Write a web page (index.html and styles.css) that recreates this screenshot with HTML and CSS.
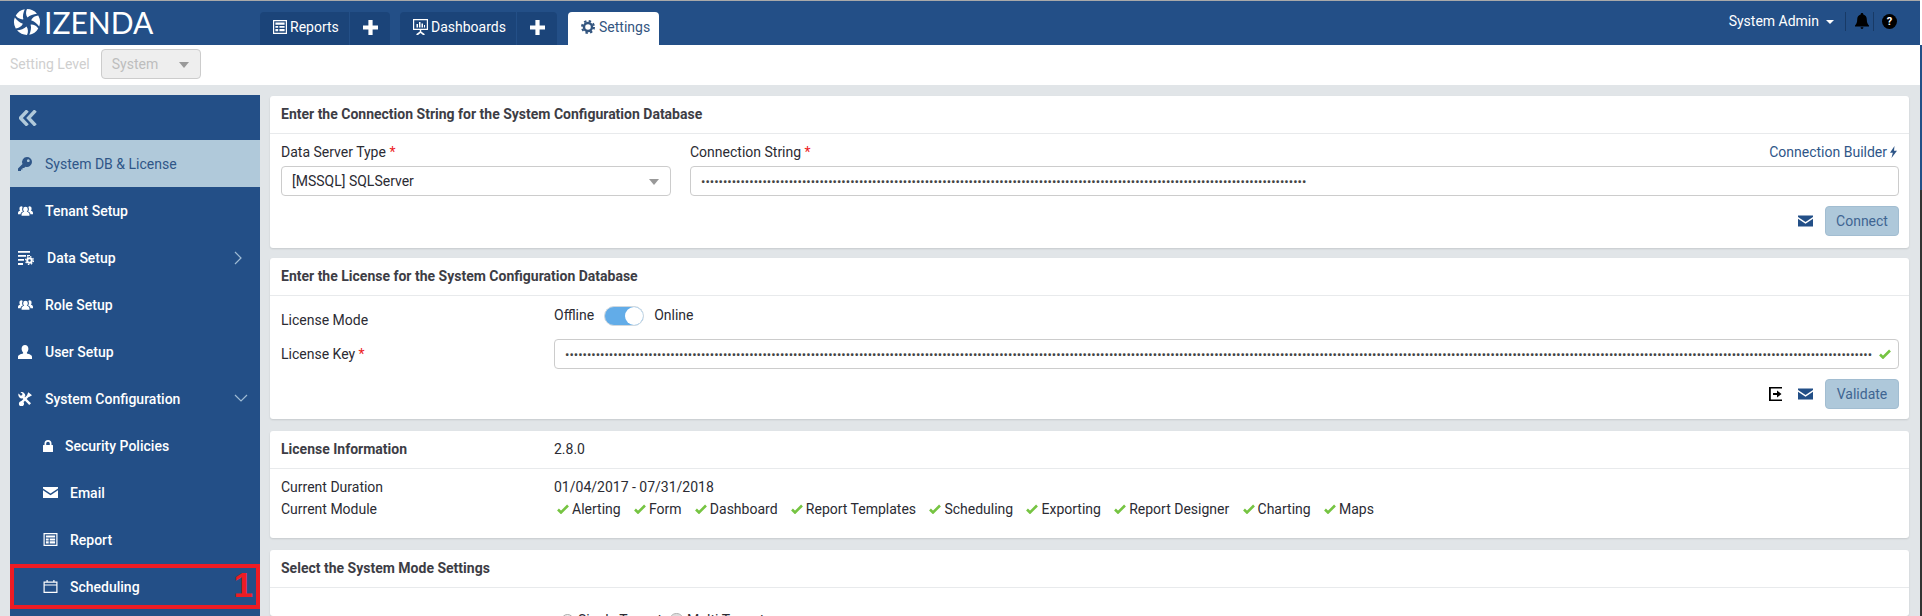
FILE: index.html
```html
<!DOCTYPE html>
<html lang="en">
<head>
    <meta charset="UTF-8">
    <meta name="viewport" content="width=device-width, initial-scale=1.0">
    <title>Izenda - Settings</title>
    <link rel="stylesheet" href="styles.css">
</head>
<body>
    <header class="topbar">
        <div class="logo">
            <svg class="logo-mark" viewBox="0 0 28 28">
                <defs><path id="blade" d="M14 0A14 14 0 0 1 24.700 5C21 5.500 17 6.500 14.500 9.200C12.600 6.200 12.500 3 14 0Z"/></defs>
                <use href="#blade"/>
                <use href="#blade" transform="rotate(60 14 14)"/>
                <use href="#blade" transform="rotate(120 14 14)"/>
                <use href="#blade" transform="rotate(180 14 14)"/>
                <use href="#blade" transform="rotate(240 14 14)"/>
                <use href="#blade" transform="rotate(300 14 14)"/>
            </svg>
            <span class="logo-text">IZENDA</span>
        </div>
        <nav class="tabs">
            <div class="tab-group">
                <a class="tab tab-reports">
                    <svg class="icon-tab" viewBox="0 0 14 14"><path fill-rule="evenodd" d="M0 0h14v14H0zM1.200 1.200v11.600h11.600V1.200zM2.400 2.400h9.200v2.400H2.400zM2.400 6h2.800v1.800H2.400zM6.400 6h5.200v1.800H6.400zM2.400 9h2.800v2.200H2.400zM6.400 9h5.200v2.200H6.400z"/></svg>
                    Reports
                </a>
                <a class="tab-add"><svg class="icon-plus" viewBox="0 0 15 15"><path d="M5.400 0h4.200v5.400H15v4.200H9.600V15H5.400V9.600H0V5.400h5.400z"/></svg></a>
            </div>
            <div class="tab-group">
                <a class="tab tab-dashboards">
                    <svg class="icon-tab icon-screen" viewBox="0 0 15 16"><path fill-rule="evenodd" d="M0 0h15v11H8.200v1.400l3.400 2.600v1H10L7.500 14 5 16H3.400v-1l3.400-2.600V11H0zM1.200 1.200v8.600h12.600V1.200zM3.500 5h1.500v3.500H3.500zM6 3h1.500v5.500H6zM8.500 4.500H10v4H8.500zM11 6h1v2.500h-1z"/></svg>
                    Dashboards
                </a>
                <a class="tab-add"><svg class="icon-plus" viewBox="0 0 15 15"><path d="M5.400 0h4.200v5.400H15v4.200H9.600V15H5.400V9.600H0V5.400h5.400z"/></svg></a>
            </div>
            <a class="tab tab-settings">
                <svg class="icon-tab" viewBox="0 0 16 16"><circle cx="8" cy="8" r="4.600" fill="none" stroke="currentColor" stroke-width="2.800"/><circle cx="8" cy="8" r="6.800" fill="none" stroke="currentColor" stroke-width="2.400" stroke-dasharray="2.700 2.640"/></svg>
                Settings
            </a>
        </nav>
        <div class="user-menu">
            <span class="user-name">System Admin</span>
            <span class="caret"></span>
            <span class="user-sep"></span>
            <svg class="icon-bell" viewBox="0 0 14 16"><path d="M7 0C8 0 8.400.7 8.300 1.500C10.600 2 11.800 4 11.800 6.500C11.800 10 12.800 11 14 12.500V13.500H0V12.500C1.200 11 2.200 10 2.200 6.500C2.200 4 3.400 2 5.700 1.500C5.600.7 6 0 7 0ZM5.600 14.300H8.400C8.400 15.200 7.800 16 7 16C6.200 16 5.600 15.200 5.600 14.300Z"/></svg>
            <span class="user-sep"></span>
            <span class="help-btn">?</span>
        </div>
    </header>

    <div class="toolbar">
        <span class="toolbar-label">Setting Level</span>
        <div class="select select-disabled">System<span class="select-arrow"></span></div>
    </div>

    <main class="page">
        <aside class="sidebar">
            <div class="side-head">
                <svg class="icon-collapse" viewBox="0 0 18 16"><path d="M8.500 .5L1.500 8l7 7.500M16.500 .5L9.500 8l7 7.500"/></svg>
            </div>
            <a class="side-item is-active">
                <svg class="side-icon" viewBox="0 0 14 14"><path fill-rule="evenodd" d="M9 0a5 5 0 0 1 5 5a5 5 0 0 1-6.500 4.700L6 11H4.500v1.500H3V14H0v-2.600L4.500 7A5 5 0 0 1 9 0ZM10.300 2.300a1.400 1.400 0 1 0 .01 0Z"/></svg>
                System DB &amp; License
            </a>
            <a class="side-item">
                <svg class="side-icon icon-users" viewBox="0 0 16 12"><use href="#users"/></svg>
                Tenant Setup
            </a>
            <a class="side-item">
                <svg class="side-icon icon-data" viewBox="0 0 16 14"><path d="M0 0h12v1.800H0zM0 4h8v1.800H0zM9 4h3v1H9zM0 8h6v1.800H0zM0 12h5V14H0z"/><circle cx="11.500" cy="9.500" r="2.300" fill="none" stroke="currentColor" stroke-width="2"/><circle cx="11.500" cy="9.500" r="3.900" fill="none" stroke="currentColor" stroke-width="1.300" stroke-dasharray="1.500 1.560"/></svg>
                Data Setup
                <svg class="chevron chevron-right" viewBox="0 0 8 14"><path d="M1 1l6 6-6 6"/></svg>
            </a>
            <a class="side-item">
                <svg class="side-icon icon-users" viewBox="0 0 16 12">
                    <defs><path id="users" d="M8 1.500a2.500 2.500 0 0 1 2.500 2.500c0 1.200-.6 2.200-1.300 2.800c1.800.4 3 1.200 3 2.700V11H3.800V9.500c0-1.500 1.200-2.300 3-2.700C6.100 6.200 5.500 5.200 5.500 4A2.500 2.500 0 0 1 8 1.500ZM3.500 1a2 2 0 0 1 1.500.7C4.600 2.300 4.400 3 4.400 4c0 1 .3 1.800.9 2.500C3.800 7 2.800 8 2.800 9.500H0V8c0-1.200.8-2 2.300-2.300C1.800 5.200 1.500 4.500 1.500 3.500A2.200 2.200 0 0 1 3.500 1ZM12.500 1a2.200 2.200 0 0 1 2 2.500c0 1-.3 1.700-.8 2.200C15.200 6 16 6.800 16 8v1.500h-2.800c0-1.500-1-2.500-2.500-3c.6-.7.900-1.500.9-2.500c0-1-.2-1.700-.6-2.300A2 2 0 0 1 12.500 1Z"/></defs>
                    <use href="#users"/>
                </svg>
                Role Setup
            </a>
            <a class="side-item">
                <svg class="side-icon" viewBox="0 0 14 14"><path d="M7 0c2 0 3.400 1.600 3.400 3.800c0 1.500-.6 2.800-1.500 3.600v1c2.500.7 5.100 1.400 5.100 3.400V14H0v-2.200c0-2 2.600-2.700 5.100-3.400v-1C4.200 6.600 3.600 5.300 3.600 3.800C3.600 1.600 5 0 7 0Z"/></svg>
                User Setup
            </a>
            <a class="side-item">
                <svg class="side-icon" viewBox="0 0 15 15">
                    <path class="tool-bar" d="M4 4l9 9"/>
                    <path class="tool-bar" d="M11.500 3.500L3.500 11.500"/>
                    <path d="M.6 1.600L3 4l1.400-.4L4.800 2 2.600.2A4 4 0 0 1 7.800 4.600L4.500 7A4 4 0 0 1 .6 1.600Z"/>
                    <path d="M11 .2L15 3.400l-2.600 1.800-2.200-.4-.2-2.200zM3.200 9.800a2.800 2.800 0 1 1-.01 5.500a2.800 2.800 0 0 1 .01-5.500Z"/>
                </svg>
                System Configuration
                <svg class="chevron chevron-down" viewBox="0 0 14 8"><path d="M1 1l6 6 6-6"/></svg>
            </a>
            <a class="side-item side-sub">
                <svg class="sub-icon" viewBox="0 0 10 12"><path fill-rule="evenodd" d="M5 0a3.500 3.500 0 0 1 3.500 3.500V5H9.500a.5.500 0 0 1 .5.500v6a.5.500 0 0 1-.5.500H.5a.5.500 0 0 1-.5-.5v-6A.5.500 0 0 1 .5 5H1.500V3.500A3.500 3.500 0 0 1 5 0ZM3.200 5h3.600V3.500a1.800 1.800 0 0 0-3.600 0Z"/></svg>
                Security Policies
            </a>
            <a class="side-item side-sub">
                <svg class="sub-icon icon-wide" viewBox="0 0 15 11"><use href="#mail"/></svg>
                Email
            </a>
            <a class="side-item side-sub">
                <svg class="sub-icon icon-wide" viewBox="0 0 14 13"><path fill-rule="evenodd" d="M0 0h14v13H0zM1.200 1.200v10.600h11.600V1.200zM2.400 2.400h9.200v2H2.400zM2.400 5.400h2.800v2H2.400zM6.200 5.400h5.400v2H6.200zM2.400 8.300h2.800v2.300H2.400zM6.200 8.300h5.400v2.300H6.200z"/></svg>
                Report
            </a>
            <a class="side-item side-sub">
                <svg class="sub-icon icon-wide" viewBox="0 0 14 13"><path fill-rule="evenodd" d="M3 0h1.200v1.500h5.600V0H11v1.500h3V13H0V1.500h3zM1.200 2.700v1.700h11.600V2.700zM1.200 5.400v6.400h11.600V5.400z"/></svg>
                Scheduling
                <div class="mark-box"><span class="mark-number">1</span></div>
            </a>
        </aside>

        <div class="content">
            <section class="card card-connection">
                <h3 class="card-title">Enter the Connection String for the System Configuration Database</h3>
                <div class="card-body">
                    <div class="conn-fields">
                        <div>
                            <label class="field-label">Data Server Type <span class="req">*</span></label>
                            <div class="select">[MSSQL] SQLServer<span class="select-arrow"></span></div>
                        </div>
                        <div>
                            <div class="label-row">
                                <label class="field-label">Connection String <span class="req">*</span></label>
                                <a class="builder-link">Connection Builder
                                    <svg class="icon-bolt" viewBox="0 0 7 12"><path d="M4.500 0L0 6.800h2.800L1.500 12 7 4.800H4z"/></svg>
                                </a>
                            </div>
                            <input class="text-input" type="password" readonly value="xxxxxxxxxxxxxxxxxxxxxxxxxxxxxxxxxxxxxxxxxxxxxxxxxx
xxxxxxxxxxxxxxxxxxxxxxxxxxxxxxxxxxxxxxxxxxxxxxxxxx
xxxxxxxxxxxxxxxxxxxxxxxxxxxxxxxxxxxxxx">
                        </div>
                    </div>
                    <div class="actions">
                        <svg class="icon-mail-btn" viewBox="0 0 15 11"><defs><path id="mail" d="M0 0h15v1.500L7.500 6.500 0 1.500zM0 3.200l7.500 5 7.500-5V11H0z"/></defs><use href="#mail"/></svg>
                        <button class="btn">Connect</button>
                    </div>
                </div>
            </section>

            <section class="card card-license">
                <h3 class="card-title">Enter the License for the System Configuration Database</h3>
                <div class="card-body">
                    <div class="form-row row-mode">
                        <label class="field-label mode-label">License Mode</label>
                        <div class="mode-switch">
                            <span class="mode-text">Offline</span>
                            <span class="toggle"><span class="toggle-knob"></span></span>
                            <span class="mode-text">Online</span>
                        </div>
                    </div>
                    <div class="form-row row-key">
                        <label class="field-label">License Key <span class="req">*</span></label>
                        <div class="key-wrap">
                            <input class="text-input" type="password" readonly value="xxxxxxxxxxxxxxxxxxxxxxxxxxxxxxxxxxxxxxxxxxxxxxxxxx
xxxxxxxxxxxxxxxxxxxxxxxxxxxxxxxxxxxxxxxxxxxxxxxxxx
xxxxxxxxxxxxxxxxxxxxxxxxxxxxxxxxxxxxxxxxxxxxxxxxxx
xxxxxxxxxxxxxxxxxxxxxxxxxxxxxxxxxxxxxxxxxxxxxxxxxx
xxxxxxxxxxxxxxxxxxxxxxxxxxxxxxxxxxxxxxxxxxxxxxxxxx
xxxxxxxxxxxxxxxxxxxxxxxxxxxxxxxxxxxxxxxxxxxxxxxx">
                            <svg class="icon-check key-check" viewBox="0 0 12 10"><path d="M1 5.500l3 3L11 1.500"/></svg>
                        </div>
                    </div>
                    <div class="actions">
                        <svg class="icon-export" viewBox="0 0 13 14"><path d="M0 0h13v1.500H1.800v11H13V14H0zM4 6h4V3.500L12.500 7 8 10.500V8H4z"/></svg>
                        <svg class="icon-mail-btn" viewBox="0 0 15 11"><use href="#mail"/></svg>
                        <button class="btn">Validate</button>
                    </div>
                </div>
            </section>

            <section class="card card-info">
                <div class="form-row info-head">
                    <h3 class="info-title">License Information</h3>
                    <span>2.8.0</span>
                </div>
                <div class="info-body">
                    <div class="form-row info-row">
                        <span>Current Duration</span>
                        <span>01/04/2017 - 07/31/2018</span>
                    </div>
                    <div class="form-row info-row">
                        <span>Current Module</span>
                        <ul class="modules">
                            <li><svg class="icon-check" viewBox="0 0 12 10"><path d="M1 5.500l3 3L11 1.500"/></svg>Alerting</li>
                            <li><svg class="icon-check" viewBox="0 0 12 10"><path d="M1 5.500l3 3L11 1.500"/></svg>Form</li>
                            <li><svg class="icon-check" viewBox="0 0 12 10"><path d="M1 5.500l3 3L11 1.500"/></svg>Dashboard</li>
                            <li><svg class="icon-check" viewBox="0 0 12 10"><path d="M1 5.500l3 3L11 1.500"/></svg>Report Templates</li>
                            <li><svg class="icon-check" viewBox="0 0 12 10"><path d="M1 5.500l3 3L11 1.500"/></svg>Scheduling</li>
                            <li><svg class="icon-check" viewBox="0 0 12 10"><path d="M1 5.500l3 3L11 1.500"/></svg>Exporting</li>
                            <li><svg class="icon-check" viewBox="0 0 12 10"><path d="M1 5.500l3 3L11 1.500"/></svg>Report Designer</li>
                            <li><svg class="icon-check" viewBox="0 0 12 10"><path d="M1 5.500l3 3L11 1.500"/></svg>Charting</li>
                            <li><svg class="icon-check" viewBox="0 0 12 10"><path d="M1 5.500l3 3L11 1.500"/></svg>Maps</li>
                        </ul>
                    </div>
                </div>
            </section>

            <section class="card card-mode">
                <h3 class="card-title">Select the System Mode Settings</h3>
                <div class="form-row mode-body">
                    <span></span>
                    <div class="radios">
                        <label class="radio"><span class="radio-dot"></span>Single Tenant</label>
                        <label class="radio"><span class="radio-dot is-checked"></span>Multi Tenant</label>
                    </div>
                </div>
            </section>
        </div>
    </main>
</body>
</html>
```

FILE: styles.css
```css
html {
    height: 616px;
    overflow: hidden;
    background: linear-gradient(to bottom, #fff 45px, #234f87 45px, #234f87 190px, #333 190px);
}
body {
    font-family: Roboto, "Liberation Sans", sans-serif;
    font-size: 14px;
    color: #2b2b33;
    background-color: #e1e5e8;
    margin: 0;
    width: 1920px;
    height: 616px;
    overflow: hidden;
}
h3, ul {
    margin: 0;
    padding: 0;
}

/* top bar */
.topbar {
    height: 44px;
    border-top: 1px solid #a9a9a9;
    background-color: #234f87;
    display: flex;
    align-items: flex-end;
    color: #fff;
}
.logo {
    width: 260px;
    height: 44px;
    display: flex;
    align-items: center;
    box-sizing: border-box;
    padding: 0 0 3px 13px;
}
.logo-mark {
    width: 28px;
    height: 26px;
    fill: #fff;
}
.logo-text {
    font-family: Lato, sans-serif;
    font-size: 30px;
    margin-left: 3px;
}
.tabs {
    display: flex;
    gap: 10px;
}
.tab-group {
    display: flex;
    height: 33px;
    background-color: #1b4479;
    border-radius: 4px 4px 0 0;
}
.tab {
    display: flex;
    align-items: center;
    gap: 3px;
    height: 33px;
    box-sizing: border-box;
    padding-left: 13px;
    padding-bottom: 3px;
}
.tab-reports {
    width: 90px;
    border-right: 1px solid #234f87;
}
.tab-dashboards {
    width: 117px;
    border-right: 1px solid #234f87;
}
.tab-add {
    width: 40px;
    display: flex;
    align-items: center;
    justify-content: center;
    padding-bottom: 3px;
}
.tab-settings {
    width: 91px;
    margin-left: 1px;
    background-color: #fff;
    color: #33557f;
    border-radius: 4px 4px 0 0;
    gap: 4px;
}
.icon-tab {
    width: 14px;
    height: 14px;
    fill: currentColor;
}
.icon-screen {
    width: 15px;
    height: 16px;
}
.icon-plus {
    width: 15px;
    height: 15px;
    fill: #fff;
}
.user-menu {
    margin-left: auto;
    height: 44px;
    padding-right: 23px;
    display: flex;
    align-items: center;
    padding-bottom: 4px;
    box-sizing: border-box;
}
.caret {
    width: 0;
    height: 0;
    margin: 2px 11px 0 7px;
    border-left: 4px solid transparent;
    border-right: 4px solid transparent;
    border-top: 4px solid #fff;
}
.user-sep {
    width: 1px;
    height: 19px;
    background-color: #183a66;
}
.icon-bell {
    width: 14px;
    height: 16px;
    margin: 0 4px 0 9px;
    fill: #000;
}
.help-btn {
    width: 15px;
    height: 15px;
    margin-left: 8px;
    border-radius: 50%;
    background-color: #000;
    color: #fff;
    font-size: 11px;
    font-weight: 700;
    line-height: 15px;
    text-align: center;
}

/* setting level */
.toolbar {
    height: 40px;
    background-color: #fff;
    display: flex;
    align-items: center;
    gap: 11px;
    padding: 0 0 2px 10px;
    box-sizing: border-box;
}
.toolbar-label {
    color: #cfcfcf;
}
.select {
    position: relative;
    height: 30px;
    box-sizing: border-box;
    border: 1px solid #ccc;
    border-radius: 4px;
    background-color: #fff;
    line-height: 29px;
    padding-left: 10px;
}
.select-disabled {
    width: 100px;
    background-color: #eee;
    color: #bdbdbd;
}
.select-arrow {
    position: absolute;
    right: 11px;
    top: 12px;
    width: 0;
    height: 0;
    border-left: 5px solid transparent;
    border-right: 5px solid transparent;
    border-top: 6px solid #999;
}

/* sidebar */
.page {
    display: flex;
    padding: 10px 11px 0 10px;
    gap: 10px;
}
.sidebar {
    width: 250px;
    flex: none;
    height: 521px;
    background-color: #234f87;
    color: #fff;
    font-weight: 500;
}
.side-head {
    height: 45px;
    display: flex;
    align-items: center;
    padding-left: 9px;
}
.icon-collapse {
    width: 18px;
    height: 16px;
    fill: none;
    stroke: #b0c9da;
    stroke-width: 3.400;
}
.side-item {
    position: relative;
    height: 47px;
    display: flex;
    align-items: center;
    padding-left: 8px;
    box-sizing: border-box;
}
.side-item.is-active {
    background-color: #b0c9da;
    color: #2f5688;
    font-weight: 400;
}
.side-icon {
    width: 14px;
    height: 14px;
    margin-right: 13px;
    fill: currentColor;
}
.tool-bar {
    fill: none;
    stroke: currentColor;
    stroke-width: 2.600;
}
.icon-users {
    width: 15px;
    height: 12px;
    margin-right: 12px;
}
.icon-data {
    width: 16px;
    height: 14px;
    margin-right: 13px;
}
.side-sub {
    padding-left: 33px;
}
.sub-icon {
    width: 10px;
    height: 12px;
    margin-right: 12px;
    fill: currentColor;
}
.sub-icon.icon-wide {
    width: 15px;
    height: 13px;
}
.chevron {
    position: absolute;
    fill: none;
    stroke: #9fbcd4;
    stroke-width: 1.200;
}
.chevron-right {
    left: 224px;
    top: 17px;
    width: 8px;
    height: 14px;
}
.chevron-down {
    left: 224px;
    top: 19px;
    width: 14px;
    height: 8px;
}
.mark-box {
    position: absolute;
    inset: 1px 0;
    border: 4px solid #ed1c24;
}
.mark-number {
    position: absolute;
    right: 3px;
    top: -3px;
    font-family: "Liberation Sans", sans-serif;
    font-size: 35px;
    font-weight: 700;
    line-height: 40px;
    color: #ed1c24;
}

/* cards */
.content {
    flex: 1;
    padding-top: 1px;
    min-width: 0;
}
.card {
    background-color: #fff;
    border-radius: 3px;
    box-shadow: 0 1px 2px rgba(0, 0, 0, 0.12);
}
.card-connection {
    height: 152px;
}
.card-license {
    height: 161px;
    margin-top: 10px;
}
.card-info {
    height: 107px;
    margin-top: 12px;
}
.card-mode {
    height: 66px;
    margin-top: 12px;
    overflow: hidden;
}
.card-title {
    height: 38px;
    box-sizing: border-box;
    border-bottom: 1px solid #e8eaec;
    padding: 0 11px;
    line-height: 36px;
    font-size: 14px;
    font-weight: 700;
    color: #3d3d45;
}
.card-body {
    padding: 8px 10px 0 11px;
}
.field-label {
    display: block;
    line-height: 20px;
}
.req {
    color: #ed1c24;
}
.conn-fields {
    display: grid;
    grid-template-columns: 390px 1fr;
    gap: 19px;
}
.label-row {
    display: flex;
    justify-content: space-between;
}
.builder-link {
    color: #2f5688;
    display: flex;
    align-items: center;
    gap: 3px;
    padding-right: 2px;
}
.icon-bolt {
    width: 7px;
    height: 12px;
    fill: #2f5688;
}
.conn-fields .select {
    margin-top: 4px;
}
.conn-fields .text-input {
    margin-top: 4px;
}
.text-input {
    display: block;
    width: 100%;
    height: 30px;
    box-sizing: border-box;
    border: 1px solid #ccc;
    border-radius: 4px;
    padding: 0 10px;
    font-family: Roboto, sans-serif;
    font-size: 13px;
    color: #444;
    outline: none;
}
.actions {
    display: flex;
    justify-content: flex-end;
    align-items: center;
    margin-top: 10px;
}
.btn {
    width: 74px;
    height: 30px;
    padding: 0;
    box-sizing: border-box;
    border: 1px solid #a2bdd1;
    border-radius: 4px;
    background-color: #aec8da;
    color: #3f6592;
    font-family: Roboto, sans-serif;
    font-size: 14px;
}
.icon-mail-btn {
    width: 15px;
    height: 12px;
    margin-right: 12px;
    fill: #234f87;
}
.icon-export {
    width: 13px;
    height: 14px;
    margin-right: 16px;
    fill: #000;
}

/* license */
.form-row {
    display: grid;
    grid-template-columns: 273px 1fr;
    align-items: start;
}
.row-mode {
    height: 33px;
    padding-top: 2px;
}
.mode-label {
    padding-top: 4px;
}
.mode-switch {
    display: flex;
    align-items: center;
    height: 20px;
    gap: 10px;
}
.mode-text {
    margin-top: -2px;
}
.toggle {
    position: relative;
    width: 40px;
    height: 20px;
    box-sizing: border-box;
    border-radius: 10px;
    background-color: #62ace8;
    border: 1px solid #d0d8de;
}
.toggle-knob {
    position: absolute;
    right: 0;
    top: 0;
    width: 18px;
    height: 18px;
    border-radius: 50%;
    background-color: #fff;
}
.row-key .field-label {
    line-height: 30px;
}
.key-wrap {
    position: relative;
}
.icon-check {
    width: 12px;
    height: 10px;
    fill: none;
    stroke: #76c442;
    stroke-width: 2.600;
}
.key-check {
    position: absolute;
    right: 8px;
    top: 10px;
}

/* license information */
.info-head {
    height: 38px;
    box-sizing: border-box;
    border-bottom: 1px solid #e8eaec;
    padding: 0 11px;
    line-height: 36px;
}
.info-title {
    font-size: 14px;
    font-weight: 700;
    color: #3d3d45;
}
.info-body {
    padding-top: 7px;
}
.info-row {
    padding: 0 11px;
    line-height: 22px;
}
.modules {
    list-style: none;
    display: flex;
    gap: 13.300px;
    padding-left: 3px;
}
.modules li {
    display: flex;
    align-items: center;
    gap: 3px;
}

/* system mode */
.mode-body {
    padding: 24px 11px 0;
}
.radios {
    display: flex;
    gap: 8px;
    padding-left: 7px;
}
.radio {
    display: flex;
    align-items: center;
    gap: 4px;
}
.radio-dot {
    width: 13px;
    height: 13px;
    box-sizing: border-box;
    border: 1px solid #aaa;
    border-radius: 50%;
    background-color: #eee;
}
.radio-dot.is-checked {
    border: 4px solid #ddd;
    outline: 1px solid #aaa;
    background-color: #888;
}
```
